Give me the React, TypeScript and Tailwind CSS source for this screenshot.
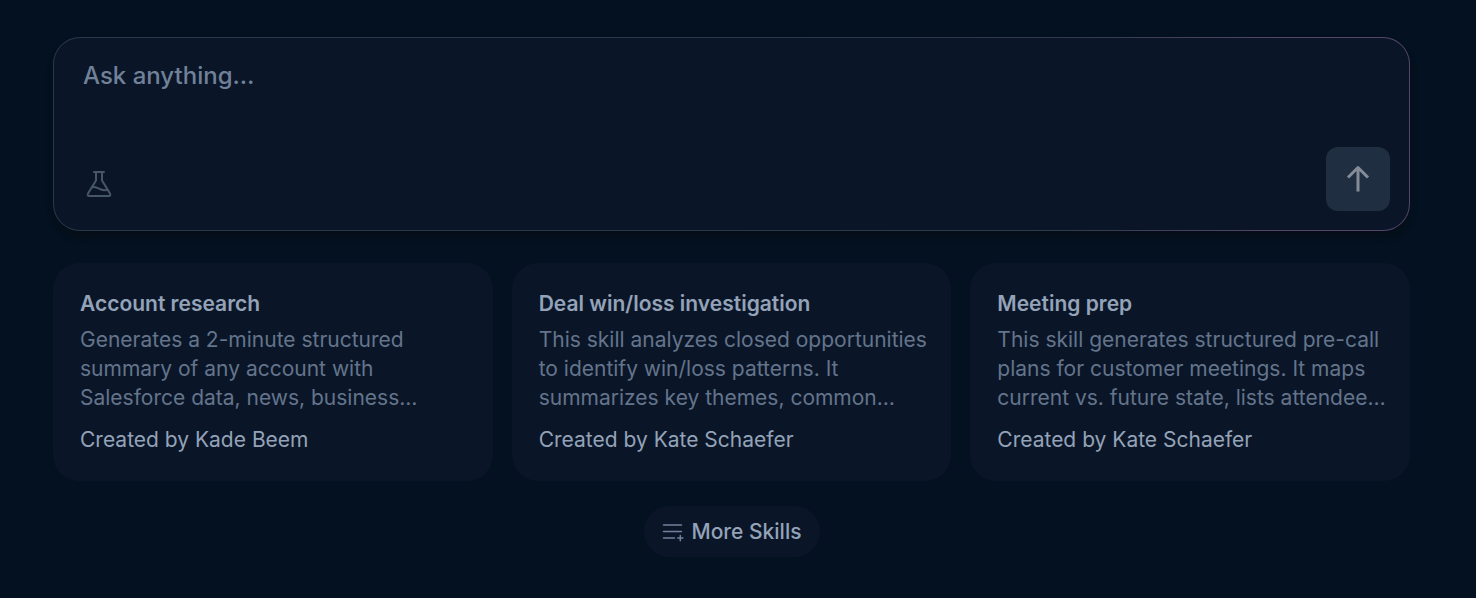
import React from "react";

type Skill = { title: string; description: string; author: string };

const skills: Skill[] = [
  {
    title: "Account research",
    description:
      "Generates a 2-minute structured summary of any account with Salesforce data, news, business…",
    author: "Kade Beem",
  },
  {
    title: "Deal win/loss investigation",
    description:
      "This skill analyzes closed opportunities to identify win/loss patterns. It summarizes key themes, common…",
    author: "Kate Schaefer",
  },
  {
    title: "Meeting prep",
    description:
      "This skill generates structured pre-call plans for customer meetings. It maps current vs. future state, lists attendee…",
    author: "Kate Schaefer",
  },
];

function FlaskIcon() {
  return (
    <svg width="26" height="28" viewBox="0 0 26 28" fill="none" stroke="currentColor" strokeWidth="2" strokeLinecap="round" strokeLinejoin="round" aria-hidden="true">
      <path d="M8 2H18M10 2V10.500L2 23.500Q1 26 3.200 26H22.800Q25 26 24 23.500L16 10.500V2" />
      <path d="M6 17.200C9 16 11.500 18.300 14.500 19.300C17 20.300 19 20.600 21.500 19.800" />
    </svg>
  );
}

function ArrowUpIcon() {
  return (
    <svg width="24" height="28" viewBox="0 0 24 28" fill="none" stroke="currentColor" strokeWidth="3" strokeLinejoin="round" aria-hidden="true">
      <path d="M12 26.500V2.500M2 12.500L12 2.500L22 12.500" />
    </svg>
  );
}

function ListPlusIcon() {
  return (
    <svg width="22" height="20" viewBox="0 0 22 20" fill="none" stroke="currentColor" strokeWidth="1.5" strokeLinecap="round" aria-hidden="true">
      <path d="M1.500 3H19.500M1.500 9.500H19.500M1.500 16H12.500M18.300 13.500V18.700M15.700 16H20.900" />
    </svg>
  );
}

function SkillCard({ title, description, author }: Skill) {
  return (
    <button type="button" className="flex flex-col rounded-[26px] bg-[#0a1628] pt-[26px] pr-4 pb-[27px] pl-[27px] text-left text-[21px] leading-[29px]">
      <span className="font-semibold text-[#94a3b8]">{title}</span>
      <span className="mt-[7px] text-[#64748b]">{description}</span>
      <span className="mt-[13px] text-[#94a3b8]">Created by {author}</span>
    </button>
  );
}

export default function App() {
  return (
    <main className="min-h-screen bg-[#031120] pt-[37px] pr-[66px] pb-10 pl-[53px] font-['Inter',sans-serif]">
      <form
        onSubmit={(e) => e.preventDefault()}
        className="rounded-[27px] bg-linear-to-r from-[#263849] from-50% via-[#303a50] via-75% to-[#54456a] to-90% p-px shadow-[0_6px_6px_0_#060f18]"
      >
        <div className="rounded-[26px] bg-[#0a1628] pt-5 pr-[19px] pb-[19px] pl-[29px]">
          <textarea
            aria-label="Ask anything"
            placeholder="Ask anything…"
            className="block h-[89px] w-full resize-none bg-transparent text-2xl leading-9 font-medium text-slate-300 outline-none placeholder:text-[#718198]"
          />
          <div className="flex items-center justify-between">
            <button type="button" aria-label="Experiments" className="mt-2.5 ml-[3px] text-[#475569]">
              <FlaskIcon />
            </button>
            <button type="submit" aria-label="Send" className="flex size-16 items-center justify-center rounded-xl bg-[#1f2e40] text-[#858b97]">
              <ArrowUpIcon />
            </button>
          </div>
        </div>
      </form>

      <section aria-label="Skills" className="mt-8 grid grid-cols-3 gap-[19px]">
        {skills.map((skill) => (
          <SkillCard key={skill.title} {...skill} />
        ))}
      </section>

      <div className="mt-[25px] flex justify-center">
        <button type="button" className="flex items-center gap-2 rounded-full bg-[#0a1628] px-[18px] py-[11px] text-[21px] leading-[29px] font-medium text-[#94a3b8]">
          <span className="text-[#71819a]">
            <ListPlusIcon />
          </span>
          More Skills
        </button>
      </div>
    </main>
  );
}
